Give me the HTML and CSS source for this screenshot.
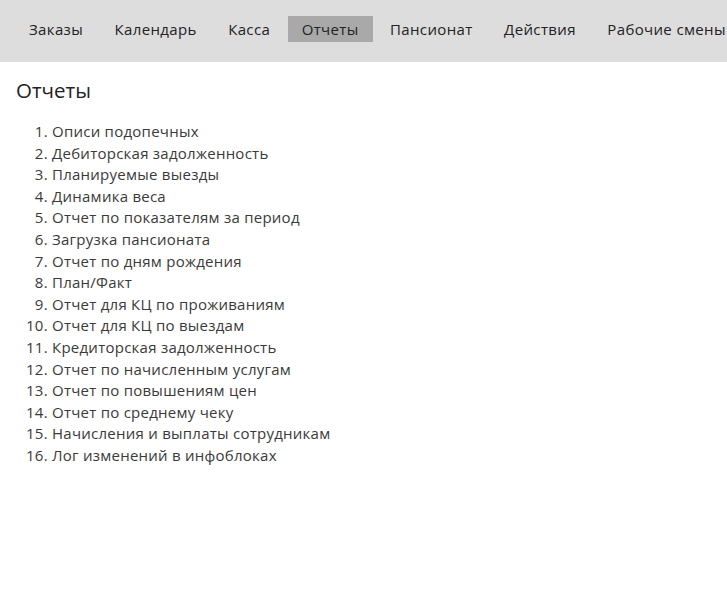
FILE: index.html
```html
<!DOCTYPE html>
<html lang="ru">
<head>
<meta charset="utf-8">
<title>Отчеты</title>
<link rel="stylesheet" href="styles.css">
</head>
<body>
<nav class="topnav">
  <ul class="menu">
    <li class="menu-item"><a href="#">Заказы</a></li>
    <li class="menu-item"><a href="#">Календарь</a></li>
    <li class="menu-item"><a href="#">Касса</a></li>
    <li class="menu-item active"><a href="#">Отчеты</a></li>
    <li class="menu-item"><a href="#">Пансионат</a></li>
    <li class="menu-item"><a href="#">Действия</a></li>
    <li class="menu-item"><a href="#">Рабочие смены</a></li>
  </ul>
</nav>
<main class="content">
  <h1 class="title">Отчеты</h1>
  <ol class="reports">
    <li>Описи подопечных</li>
    <li>Дебиторская задолженность</li>
    <li>Планируемые выезды</li>
    <li>Динамика веса</li>
    <li>Отчет по показателям за период</li>
    <li>Загрузка пансионата</li>
    <li>Отчет по дням рождения</li>
    <li>План/Факт</li>
    <li>Отчет для КЦ по проживаниям</li>
    <li>Отчет для КЦ по выездам</li>
    <li>Кредиторская задолженность</li>
    <li>Отчет по начисленным услугам</li>
    <li>Отчет по повышениям цен</li>
    <li>Отчет по среднему чеку</li>
    <li>Начисления и выплаты сотрудникам</li>
    <li>Лог изменений в инфоблоках</li>
  </ol>
</main>
</body>
</html>
```
FILE: styles.css
```css
html, body {
  margin: 0;
  padding: 0;
  background: #fff;
  font-family: "Open Sans", "DejaVu Sans", sans-serif;
  color: #333;
  overflow: hidden;
}
.topnav {
  background: #dddddd;
  height: 62px;
  box-sizing: border-box;
  padding: 16px 0 0 15px;
}
.menu {
  list-style: none;
  margin: 0;
  padding: 0;
  display: flex;
  gap: 3.5px;
  white-space: nowrap;
}
.menu-item a {
  display: block;
  height: 26px;
  line-height: 26px;
  padding: 0 14px;
  font-size: 15px;
  letter-spacing: 0.35px;
  color: #222;
  text-decoration: none;
}
.menu-item.active a {
  background: #a9a9a9;
}
.content {
  padding: 0 16px;
}
.title {
  margin: 15px 0 18px;
  font-size: 20.5px;
  font-weight: 400;
  color: #222;
  line-height: 26px;
}
.reports {
  margin: 0;
  padding-left: 36px;
  font-size: 15px;
  letter-spacing: 0.25px;
  line-height: 21.6px;
  color: #3a3a3a;
}
```
